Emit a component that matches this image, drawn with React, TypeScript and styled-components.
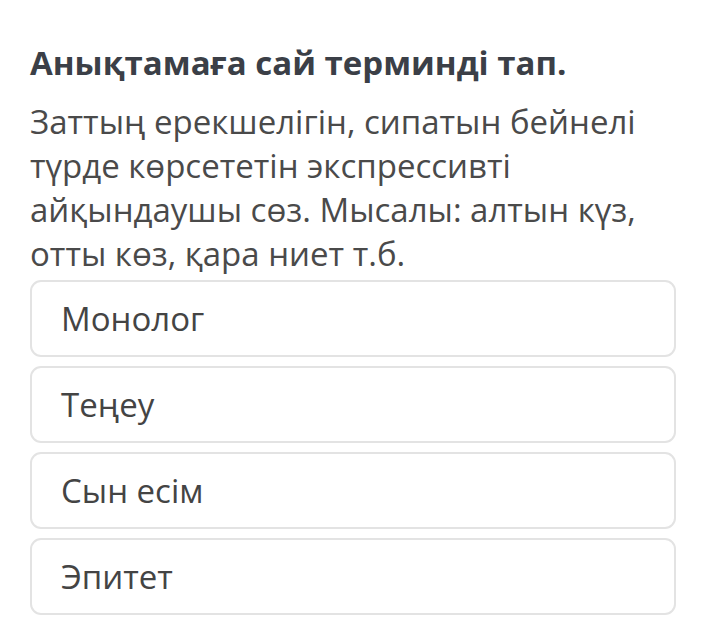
import React from "react"
import styled, { createGlobalStyle } from "styled-components"

const GlobalStyle = createGlobalStyle`
  body {
    margin: 0;
    background: #ffffff;
    font-family: "Open Sans", "Noto Sans", sans-serif;
  }
`

const options = ["Монолог", "Теңеу", "Сын есім", "Эпитет"]

const App = () => {
  return (
    <>
      <GlobalStyle />
      <Main>
        <Title>Анықтамаға сай терминді тап.</Title>
        <Question>
          Заттың ерекшелігін, сипатын бейнелі түрде көрсететін экспрессивті айқындаушы сөз. Мысалы: алтын күз, отты көз, қара ниет т.б.
        </Question>
        <Options>
          {options.map((o) => (
            <Option key={o}>{o}</Option>
          ))}
        </Options>
      </Main>
    </>
  )
}

const Main = styled.div`
  width: 646px;
  padding: 43px 0 0 30px;
  display: flex;
  flex-direction: column;
`

const Title = styled.h1`
  margin: 0;
  font-size: 33px;
  line-height: 40px;
  font-weight: 700;
  color: #3b3f47;
`

const Question = styled.p`
  width: 664px;
  margin: 17px 0 0;
  font-size: 33px;
  line-height: 44px;
  color: #4a4a4a;
`

const Options = styled.div`
  margin-top: 4px;
  display: flex;
  flex-direction: column;
  gap: 9px;
`

const Option = styled.div`
  height: 77px;
  box-sizing: border-box;
  border: 2px solid #e3e3e3;
  border-radius: 11px;
  padding: 0 0 0 29px;
  display: flex;
  align-items: center;
  font-size: 33px;
  color: #444444;
`

export default App
